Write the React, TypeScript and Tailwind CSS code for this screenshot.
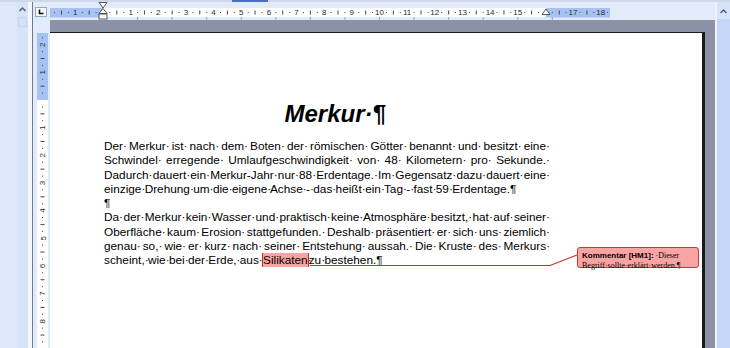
import React from 'react';

const CM = 27.65;

// text lines of the page, j = justified line (paragraph continues)
const LINES: { t: string; j: boolean; end?: boolean }[] = [
  { t: 'Der Merkur ist nach dem Boten der römischen Götter benannt und besitzt eine', j: true },
  { t: 'Schwindel erregende Umlaufgeschwindigkeit von 48 Kilometern pro Sekunde.', j: true },
  { t: 'Dadurch dauert ein Merkur-Jahr nur 88 Erdentage. Im Gegensatz dazu dauert eine', j: true },
  { t: 'einzige Drehung um die eigene Achse - das heißt ein Tag - fast 59 Erdentage.', j: false, end: true },
  { t: '', j: false, end: true },
  { t: 'Da der Merkur kein Wasser und praktisch keine Atmosphäre besitzt, hat auf seiner', j: true },
  { t: 'Oberfläche kaum Erosion stattgefunden. Deshalb präsentiert er sich uns ziemlich', j: true },
  { t: 'genau so, wie er kurz nach seiner Entstehung aussah. Die Kruste des Merkurs', j: true },
];

function Dot() {
  return <span className="inline-block w-0">·</span>;
}

function TextLine({ t, j, end }: { t: string; j: boolean; end?: boolean }) {
  const words = t ? t.split(' ') : [];
  return (
    <div className={j ? 'text-justify [text-align-last:justify]' : ''}>
      {words.map((w, i) => (
        <React.Fragment key={i}>
          {w}
          {(i < words.length - 1 || j) && <Dot />}
          {i < words.length - 1 && ' '}
        </React.Fragment>
      ))}
      {end && '¶'}
    </div>
  );
}

function HRuler() {
  const x0 = 53;
  const items: React.ReactNode[] = [];
  for (let q = -8; q <= 74; q++) {
    const x = x0 + (q * CM) / 4;
    if (x < 2 || x > 558) continue;
    if (q % 4 === 0) {
      const n = Math.abs(q / 4);
      if (n === 0 || n === 16) continue;
      items.push(
        <text key={q} x={x} y={13.3} textAnchor="middle" fontSize="8" fill="#2b2b2b" fontFamily="Liberation Sans, sans-serif">
          {n}
        </text>
      );
    } else if (q % 2 === 0) {
      items.push(<line key={q} x1={x} x2={x} y1={8.5} y2={12.5} stroke="#444" strokeWidth="1" />);
    } else {
      items.push(<rect key={q} x={x - 0.5} y={10} width={1} height={1} fill="#444" />);
    }
  }
  const tabs: React.ReactNode[] = [];
  for (let k = 1; k <= 13; k++) {
    const x = x0 + k * 1.25 * CM;
    tabs.push(<line key={k} x1={x} x2={x} y1={15.5} y2={17.5} stroke="#8a8f9c" strokeWidth="1" />);
  }
  return (
    <svg width="665" height="18" className="block">
      <rect x="0" y="6" width="560" height="9.5" fill="#a5c2f3" />
      <rect x={x0} y="6" width={496 - x0} height="9.5" fill="#ffffff" />
      {items}
      {tabs}
      <path d="M49 0.5 H57 L53 6 Z" fill="#fff" stroke="#555" />
      <path d="M53 6.5 L49 11.5 H57 Z" fill="#fff" stroke="#555" />
      <rect x="49" y="12" width="8" height="5" fill="#fff" stroke="#555" />
      <path d="M496 7 L492 12.5 H500 Z" fill="#fff" stroke="#555" />
    </svg>
  );
}

function VRuler() {
  const y0 = 67;
  const items: React.ReactNode[] = [];
  for (let q = -9; q <= 40; q++) {
    const y = y0 + (q * CM) / 4;
    if (y < 2 || y > 314) continue;
    if (q % 4 === 0) {
      const n = Math.abs(q / 4);
      if (n === 0) continue;
      items.push(
        <text
          key={q}
          x={5.5}
          y={y + 3}
          textAnchor="middle"
          fontSize="8"
          fill="#2b2b2b"
          fontFamily="Liberation Sans, sans-serif"
          transform={`rotate(-90 5.5 ${y})`}
        >
          {n}
        </text>
      );
    } else if (q % 2 === 0) {
      items.push(<line key={q} x1={3.5} x2={7.5} y1={y} y2={y} stroke="#444" strokeWidth="1" />);
    } else {
      items.push(<rect key={q} x={5} y={y - 0.5} width={1} height={1} fill="#444" />);
    }
  }
  return (
    <svg width="11" height="315" className="block">
      <rect x="0" y="0" width="11" height={y0} fill="#a5c2f3" />
      <rect x="0" y={y0} width="11" height={315 - y0} fill="#ffffff" />
      {items}
    </svg>
  );
}

export default function App() {
  return (
    <div className="flex h-[348px] w-[730px] flex-col overflow-hidden bg-[#dce8fa] font-['Liberation_Sans',sans-serif]">
      <div className="flex h-[2px] bg-[#cfd8e8]">
        <div className="w-[232px]" />
        <div className="w-[36px] bg-[#4a6ec6]" />
      </div>

      <div className="flex flex-1">
        {/* left pane */}
        <div className="w-[17px] bg-[#dce8fa]" />
        <div className="flex w-[11px] flex-col items-center bg-[#d7e4f8] pt-[4px]">
          <svg width="9" height="6" viewBox="0 0 9 6" className="block">
            <path d="M1.5 5 L4.5 2 L7.5 5" fill="none" stroke="#4d6185" strokeWidth="1.5" />
          </svg>
          <div className="mt-[5px] h-[10px] w-[9px] rounded-[1px] border border-[#c3d3ee] bg-[#d3e2f8]" />
        </div>
        <div className="w-[4px] bg-[#f3f7fe]" />
        <div className="w-px bg-[#6e7a93]" />

        {/* main */}
        <div className="flex w-[682px] flex-col bg-[#e2ebfa]">
          <div className="flex h-[18px]">
            <div className="w-[17px] pl-[2px] pt-[5px]">
              <div className="flex h-[10px] w-[12px] items-center justify-center border border-[#9aa6bb] bg-[#f5f8fd]">
                <svg width="6" height="6" viewBox="0 0 6 6" className="block">
                  <path d="M1.5 0.5 V4.5 H5.5" fill="none" stroke="#111" strokeWidth="1.6" />
                </svg>
              </div>
            </div>
            <HRuler />
          </div>

          <div className="flex flex-1">
            <div className="w-[17px] pl-[4px] pt-[13px]">
              <VRuler />
            </div>
            <div className="flex flex-1 flex-col bg-[#8c92a6] pt-[12px]">
              <div className="relative mr-[10px] flex-1 border-r-[3px] border-t border-[#1a1a1a] bg-white pl-[54px] pt-[67px]">
                <div className="w-[442px] text-black">
                  <div className="pl-[7px] text-center text-[24px] font-bold italic leading-[28px]">
                    Merkur<span>·</span>
                    <span className="inline-block w-0">¶</span>
                  </div>
                  <div className="mt-[11px] text-[11.8px] leading-[14.3px]">
                    {LINES.map((l, i) => (
                      <TextLine key={i} t={l.t} j={l.j} end={l.end} />
                    ))}
                    <div>
                      scheint,<Dot /> wie<Dot /> bei<Dot /> der<Dot /> Erde,<Dot /> aus<Dot />{' '}
                      <span className="border-x border-[#d42a2a] bg-[#f6a3a3]">
                        Silikaten<Dot /> 
                      </span>
                      zu<Dot /> bestehen.¶
                    </div>
                  </div>
                </div>

                {/* comment connector */}
                <svg className="pointer-events-none absolute left-0 top-0" width="655" height="320">
                  <path d="M260 232.5 H500 L527 222" fill="none" stroke="#d42a2a" strokeWidth="1.2" />
                </svg>

                {/* comment balloon */}
                <div className="absolute left-[527px] top-[214px] h-[21px] w-[122px] rounded-[3px] border border-[#dc2f35] bg-[#f9a3a3] pl-[4px] leading-[9.5px]">
                  <div className="whitespace-nowrap">
                    <span className="text-[8px] font-bold">Kommentar [HM1]:</span>
                    <span className="font-['Liberation_Serif',serif] text-[8px]"> ·Dieser</span>
                  </div>
                  <div className="whitespace-nowrap font-['Liberation_Serif',serif] text-[8px]">
                    Begriff·sollte·erklärt·werden.¶
                  </div>
                </div>
              </div>
            </div>
          </div>
        </div>

        {/* right scrollbar */}
        <div className="w-[2px] bg-[#eef3fd]" />
        <div className="flex w-[13px] flex-col items-center bg-[#c5d7f6]">
          <div className="flex h-[17px] w-full items-center justify-center bg-[#d6e3f9]">
            <svg width="9" height="6" viewBox="0 0 9 6" className="block">
              <path d="M1.5 5 L4.5 2 L7.5 5" fill="none" stroke="#4d6185" strokeWidth="1.5" />
            </svg>
          </div>
        </div>
      </div>
    </div>
  );
}
